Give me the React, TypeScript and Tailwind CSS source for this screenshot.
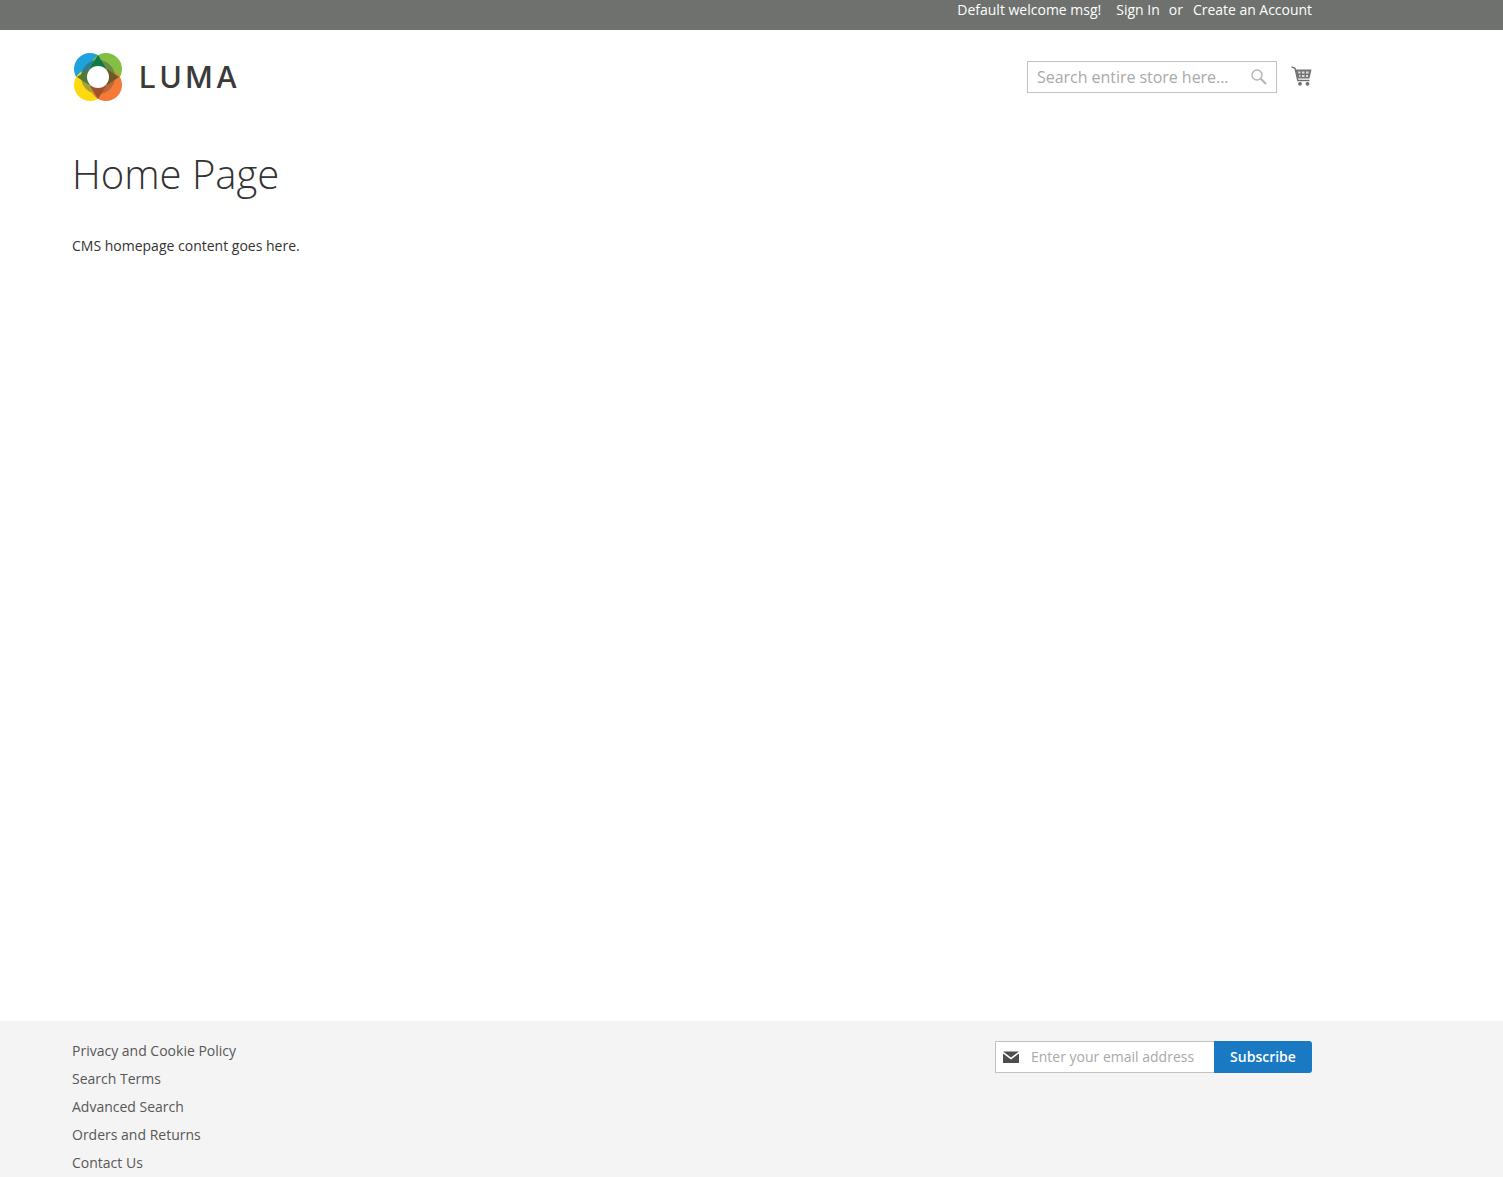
const footerLinks = ['Privacy and Cookie Policy', 'Search Terms', 'Advanced Search', 'Orders and Returns', 'Contact Us']

function Logo() {
  return (
    <svg className="w-[52px] h-[52px]" viewBox="0 0 52 52">
      <defs>
        <clipPath id="ring"><circle cx="26" cy="26" r="17" /></clipPath>
      </defs>
      <circle cx="18" cy="18" r="16" fill="#1fa3dc" />
      <circle cx="34" cy="18" r="16" fill="#84bf41" />
      <circle cx="18" cy="34" r="16" fill="#fdd90f" />
      <circle cx="34" cy="34" r="16" fill="#f47a38" />
      {/* darker ring where the petals overlap */}
      <g clipPath="url(#ring)">
        <rect x="6" y="6" width="20" height="20" fill="#2f7f8f" />
        <rect x="26" y="6" width="20" height="20" fill="#6a8a45" />
        <rect x="6" y="26" width="20" height="20" fill="#a8a03a" />
        <rect x="26" y="26" width="20" height="20" fill="#b8663a" />
      </g>
      <polygon points="26,4 18,17 34,17" fill="#0f7a43" />
      <polygon points="26,48 18,35 34,35" fill="#a5502a" />
      <polygon points="5,26 17,18 17,34" fill="#4f7a3a" />
      <polygon points="47,26 35,18 35,34" fill="#6b5a25" />
      <circle cx="26" cy="26" r="11" fill="#ffffff" />
    </svg>
  )
}

function Cart() {
  return (
    <svg className="w-[21px] h-[20px]" viewBox="0 0 21 20">
      <path d="M0.500 0.800 L4 2.300 L6.800 14.500 H18.500" fill="none" stroke="#6f6f6f" strokeWidth="1.300" />
      <path d="M4.500 3.500 H20.500 L18.500 12.500 H6.500z" fill="#757575" />
      <path d="M7 5.500 H9.500 V7.500 H7.500z M11 5.500 H13.500 V7.500 H11z M15 5.500 H17.800 L17.400 7.500 H15z M8 9 H9.500 V11 H8.400z M11 9 H13.500 V11 H11z M15 9 H17.200 L16.800 11 H15z" fill="#d9dde2" />
      <circle cx="9" cy="17.800" r="1.900" fill="#6f6f6f" />
      <circle cx="16.500" cy="17.800" r="1.900" fill="#6f6f6f" />
    </svg>
  )
}

export default function App() {
  return (
    <div className="h-[1177px] flex flex-col overflow-hidden bg-white font-['Open_Sans',sans-serif] text-[#333333]">
      {/* Top bar */}
      <div className="h-[30px] bg-[#6e716e] text-white text-sm leading-5">
        <div className="w-[1240px] ml-[72px] flex justify-end">
          <span>Default welcome msg!</span>
          <span className="ml-[15px]">Sign In</span>
          <span className="ml-[9px]">or</span>
          <span className="ml-[10px] tracking-[-0.03px]">Create an Account</span>
        </div>
      </div>

      {/* Header */}
      <header className="w-[1240px] ml-[72px] pt-[21px] flex justify-between items-start">
        <div className="flex items-center">
          <Logo />
          <span className="ml-[15px] font-['Inter',sans-serif] font-medium text-[30px] leading-none tracking-[3.5px] text-[#3a3a3a]">LUMA</span>
        </div>
        <div className="flex items-center mt-[10px]">
          <div className="w-[250px] h-[32px] border border-[#c2c2c2] pl-[9px] pr-[9px] flex items-center justify-between text-base text-[#a9a9a9]">
            <span className="tracking-[-0.04px]">Search entire store here...</span>
            <svg className="w-4 h-4" viewBox="0 0 16 16" fill="none" stroke="#b5b5b5">
              <circle cx="6" cy="6" r="5" strokeWidth="1.500" />
              <path d="M9.800 9.800 L15 15" strokeWidth="2" />
            </svg>
          </div>
          <div className="ml-[14px] -mt-[2px]"><Cart /></div>
        </div>
      </header>

      {/* Main */}
      <main className="w-[1240px] ml-[72px] flex-1">
        <h1 className="mt-[46px] text-[40px] font-light leading-[50px]">Home Page</h1>
        <p className="mt-[37px] text-sm leading-5">CMS homepage content goes here.</p>
      </main>

      {/* Footer */}
      <footer className="h-[156px] bg-[#f4f4f4]">
        <div className="w-[1240px] ml-[72px] pt-5 flex justify-between items-start">
          <ul className="flex flex-col gap-2 text-sm leading-5 text-[#575757]">
            {footerLinks.map((link) => (
              <li key={link}>{link}</li>
            ))}
          </ul>
          <div className="flex h-[32px]">
            <div className="w-[219px] bg-white border border-[#c2c2c2] border-r-0 flex items-center pl-[7px] text-sm text-[#a9a9a9]">
              <svg className="w-4 h-3 text-[#4d4d4d]" viewBox="0 0 16 12" fill="currentColor">
                <path d="M0 0.500 H16 L8 6.500z" />
                <path d="M0 2.500 L8 8.500 L16 2.500 V12 H0z" />
              </svg>
              <span className="ml-[12px]">Enter your email address</span>
            </div>
            <div className="w-[98px] bg-[#1979c3] text-white text-sm font-semibold rounded-r-[3px] flex items-center justify-center">Subscribe</div>
          </div>
        </div>
      </footer>
    </div>
  )
}
